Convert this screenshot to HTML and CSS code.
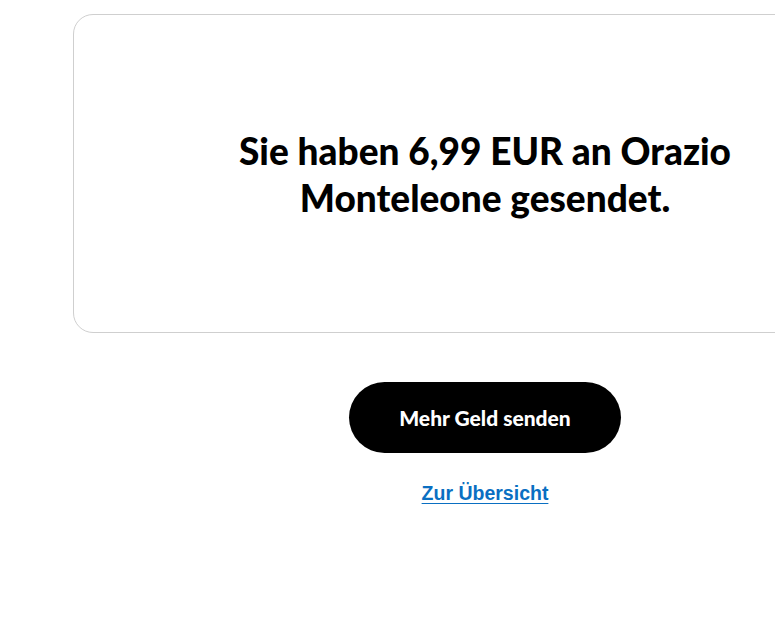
FILE: index.html
```html
<!DOCTYPE html>
<html lang="de">
<head>
<meta charset="utf-8">
<title>Geld gesendet</title>
<link rel="stylesheet" href="styles.css">
</head>
<body>
<main class="page">
  <section class="card">
    <h1 class="title">Sie haben 6,99 EUR an Orazio<br>Monteleone gesendet.</h1>
  </section>
  <div class="actions">
    <button class="btn-primary" type="button">Mehr Geld senden</button>
    <a class="link" href="#">Zur Übersicht</a>
  </div>
</main>
</body>
</html>
```
FILE: styles.css
```css
html, body {
  margin: 0;
  padding: 0;
  background: #ffffff;
  overflow: hidden;
}
.page {
  width: 824px;
  margin-left: 73px;
  padding-top: 14px;
  font-family: Lato, "Open Sans", sans-serif;
}
.card {
  box-sizing: border-box;
  height: 319px;
  border: 1px solid #cfcfcf;
  border-radius: 20px;
  display: flex;
  align-items: center;
  justify-content: center;
}
.title {
  margin: 0;
  text-align: center;
  font-size: 37px;
  line-height: 47px;
  font-weight: 900;
  color: #000;
}
.actions {
  display: flex;
  flex-direction: column;
  align-items: center;
  padding-top: 49px;
}
.btn-primary {
  width: 272px;
  height: 71px;
  border: none;
  border-radius: 36px;
  background: #000;
  color: #fff;
  font-family: Lato, sans-serif;
  font-weight: 900;
  font-size: 21px;
  cursor: pointer;
}
.link {
  margin-top: 29px;
  font-family: "Liberation Sans", Arial, sans-serif;
  font-size: 19.5px;
  font-weight: 700;
  color: #0a6fc2;
  text-decoration: underline;
  text-underline-offset: 3px;
}
```
